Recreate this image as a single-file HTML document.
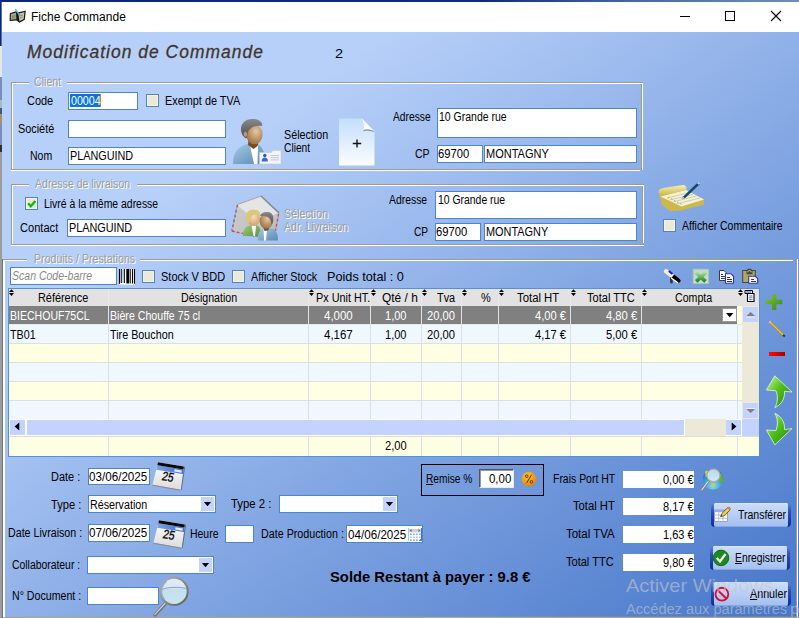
<!DOCTYPE html>
<html><head><meta charset="utf-8"><title>Fiche Commande</title>
<style>
*{box-sizing:border-box;margin:0;padding:0}
html,body{width:799px;height:618px;overflow:hidden;background:#fff}
body{font-family:"Liberation Sans",sans-serif;font-size:12.5px;color:#000;position:relative}
#win{position:absolute;left:0;top:0;width:799px;height:618px;overflow:hidden;background:#fff}
#client{position:absolute;left:2px;top:32px;width:797px;height:586px;background:linear-gradient(to bottom right,#b7d0f9 0%,#b7d0f9 24%,#4676c9 100%)}
.a{position:absolute}
.t{position:absolute;white-space:nowrap;height:16px;line-height:16px;transform-origin:0 50%;display:block}
.hd{font-style:italic;font-weight:normal;color:#42342a;height:24px;line-height:24px;-webkit-text-stroke:.3px #42342a}
.dis{color:#a29e96;text-shadow:1px 1px 0 #fff}
.wh{color:#fff}
.ph{font-style:italic;color:#8a8a8a}
.b{font-weight:bold}
.wm{color:rgba(196,198,204,.6);height:24px;line-height:24px}
.f{position:absolute;background:#fff;border:1px solid #4a86c8}
.fw{position:absolute;background:#fff}
.cb{position:absolute;width:13px;height:13px;background:#ece9d8;border:1px solid #4d84c4;box-shadow:inset 0 0 0 1px #fbf1e0}
.gl{position:absolute;background:#9c9a94}
.wl{position:absolute;background:#fff}
.btn{position:absolute;border-radius:4px;background:linear-gradient(#5a88e0,#2a52b8 35%,#0c2c96)}
.btn i{position:absolute;left:3px;right:3px;top:0;bottom:0;border-radius:2px;background:linear-gradient(#cddefa,#b9cff6 45%,#a3bfef);box-shadow:inset 0 -1px 0 #86a6e4,inset 0 1px 0 #d6e5fc}
.dd{position:absolute;width:13px;height:14px;background:#c3d3fd}
.dd:after{content:"";position:absolute;left:2.700px;top:4.700px;width:7.600px;height:4.600px;background:#000;clip-path:polygon(0 0,100% 0,50% 100%)}
</style></head><body><div id="win">
<!-- window frame -->
<div class="a" style="left:0;top:0;width:799px;height:2px;background:linear-gradient(to right,#0a2580 0%,#0c2a84 60%,#4a6aa0 80%,#6f8fb8 100%)"></div>
<div class="a" style="left:0;top:0;width:2px;height:618px;background:linear-gradient(#0a2580 0,#0a2580 46px,#e6e6e6 46px,#e6e6e6 77px,#7a8eb8 77px,#7a8eb8 100px,#a8b8c8 100px,#a8b8c8 108px,#405878 108px,#405878 114px,#a09070 114px,#a09070 125px,#7a8eb8 125px,#7a8eb8 145px,#303030 145px,#303030 152px,#9c9c9c 152px,#9c9c9c 100%)"></div>
<!-- title bar icons -->
<svg class="a" style="left:9px;top:8px" width="18" height="16" viewBox="0 0 18 16"><path d="M.8 5.200L7 3.300L9 4.600L16.800 2.600L15.800 11.800L10.600 14.800L7.400 12.600L.6 13Z" fill="#161616"/><path d="M1.900 6L7 4.600L7.400 11.200L1.700 11.700Z" fill="#a5a38a"/><path d="M9.400 5.800L15.400 4.100L14.700 10.900L10.500 13.200Z" fill="#c8c5a5"/><path d="M3 8.500L6.500 7.600M3 10L6.500 9.300M10.500 8L14 7M10.800 10L13.800 9" stroke="#77755f" stroke-width=".7"/><path d="M6.200 1.200L10.800 7.600" stroke="#5aa9cd" stroke-width="1.300"/></svg>
<svg class="a" style="left:679px;top:10px" width="12" height="12" viewBox="0 0 12 12"><path d="M1 6.5h10" stroke="#000" stroke-width="1"/></svg>
<svg class="a" style="left:724px;top:10px" width="12" height="12" viewBox="0 0 12 12"><rect x="1.5" y="1.5" width="9" height="9" fill="none" stroke="#000" stroke-width="1"/></svg>
<svg class="a" style="left:770px;top:10px" width="12" height="12" viewBox="0 0 12 12"><path d="M1 1l10 10M11 1L1 11" stroke="#000" stroke-width="1.1"/></svg>
<div class="a" style="left:1px;top:2px;width:1px;height:44px;background:#5a70b4"></div>
<div id="client"></div>
<!-- group box 1: Client -->
<div class="gl" style="left:11px;top:82px;width:18px;height:1px"></div><div class="wl" style="left:12px;top:83px;width:17px;height:1px"></div>
<div class="gl" style="left:67px;top:82px;width:576px;height:1px"></div><div class="wl" style="left:67px;top:83px;width:576px;height:1px"></div>
<div class="gl" style="left:11px;top:82px;width:1px;height:88px"></div><div class="wl" style="left:12px;top:83px;width:1px;height:86px"></div>
<div class="gl" style="left:641px;top:84px;width:1px;height:86px"></div><div class="wl" style="left:642px;top:83px;width:1px;height:87px"></div>
<div class="gl" style="left:12px;top:169px;width:628px;height:1px"></div><div class="wl" style="left:11px;top:170px;width:629px;height:1px"></div>
<!-- group box 2 -->
<div class="gl" style="left:11px;top:184px;width:18px;height:1px"></div><div class="wl" style="left:12px;top:185px;width:17px;height:1px"></div>
<div class="gl" style="left:137px;top:184px;width:507px;height:1px"></div><div class="wl" style="left:137px;top:185px;width:507px;height:1px"></div>
<div class="gl" style="left:11px;top:184px;width:1px;height:61px"></div><div class="wl" style="left:12px;top:185px;width:1px;height:59px"></div>
<div class="gl" style="left:642px;top:186px;width:1px;height:57px"></div><div class="wl" style="left:643px;top:185px;width:1px;height:58px"></div>
<div class="gl" style="left:12px;top:244px;width:632px;height:1px"></div><div class="wl" style="left:11px;top:245px;width:633px;height:1px"></div>
<!-- group box 3 -->
<div class="gl" style="left:3px;top:259px;width:24px;height:1px"></div><div class="wl" style="left:4px;top:260px;width:23px;height:1px"></div>
<div class="gl" style="left:140px;top:259px;width:654px;height:1px"></div><div class="wl" style="left:140px;top:260px;width:653px;height:1px"></div>
<div class="gl" style="left:2px;top:259px;width:1px;height:359px;background:#6b7488"></div><div class="wl" style="left:3px;top:260px;width:2px;height:357px"></div>
<div class="gl" style="left:796px;top:260px;width:1px;height:358px"></div><div class="wl" style="left:797px;top:259px;width:1px;height:359px"></div>
<div class="a" style="left:6px;top:617px;width:793px;height:1px;background:#a8a49c"></div><div class="a" style="left:6px;top:616px;width:793px;height:1px;background:rgba(168,164,156,.25)"></div>

<!-- client fields -->
<div class="f" style="left:68px;top:92px;width:70px;height:18px"></div>
<div class="a" style="left:70px;top:94px;width:30px;height:13px;background:#0a74da"></div><div class="a" style="left:100px;top:94px;width:1px;height:13px;background:#e27a22"></div>
<div class="cb" style="left:146px;top:94px"></div>
<div class="f" style="left:68px;top:120px;width:158px;height:18px"></div>
<div class="f" style="left:68px;top:147px;width:158px;height:18px"></div>
<div class="f" style="left:437px;top:108px;width:200px;height:30px"></div>
<div class="f" style="left:437px;top:145px;width:46px;height:18px"></div>
<div class="f" style="left:484px;top:145px;width:153px;height:18px"></div>
<!-- livraison fields -->
<div class="cb" style="left:25px;top:197px"><svg width="11" height="11" viewBox="0 0 11 11" style="position:absolute;left:0;top:0"><path d="M2.2 5.2L4.8 8.2L9.3 3" fill="none" stroke="#06be06" stroke-width="2.4"/></svg></div>
<div class="f" style="left:67px;top:219px;width:159px;height:18px"></div>
<div class="f" style="left:435px;top:191px;width:202px;height:28px"></div>
<div class="f" style="left:435px;top:223px;width:46px;height:18px"></div>
<div class="f" style="left:484px;top:223px;width:153px;height:18px"></div>
<div class="cb" style="left:663px;top:219px"></div>
<!-- produits toolbar -->
<div class="f" style="left:10px;top:267px;width:107px;height:18px"></div>
<div class="cb" style="left:142px;top:270px"></div>
<div class="cb" style="left:232px;top:270px"></div>

<!-- grid -->
<div class="a" id="grid" style="left:8px;top:288px;width:752px;height:169px;background:#5590d8"></div>
<div class="a" style="left:9px;top:289px;width:750px;height:17px;background:#e2e2e2"></div>
<div class="a" style="left:9px;top:306px;width:733px;height:18px;background:#808080"></div>
<div class="a" style="left:9px;top:324px;width:733px;height:19px;background:#f0f8ff"></div>
<div class="a" style="left:9px;top:343px;width:733px;height:19px;background:#ffffe4"></div>
<div class="a" style="left:9px;top:362px;width:733px;height:19px;background:#f0f8ff"></div>
<div class="a" style="left:9px;top:381px;width:733px;height:19px;background:#ffffe4"></div>
<div class="a" style="left:9px;top:400px;width:733px;height:19px;background:#f0f8ff"></div>
<div class="a" style="left:9px;top:436px;width:750px;height:20px;background:#ffffe4"></div>
<!-- row lines -->
<div class="a" style="left:9px;top:343px;width:733px;height:1px;background:#dcdfe4"></div>
<div class="a" style="left:9px;top:362px;width:733px;height:1px;background:#dcdfe4"></div>
<div class="a" style="left:9px;top:381px;width:733px;height:1px;background:#dcdfe4"></div>
<div class="a" style="left:9px;top:400px;width:733px;height:1px;background:#dcdfe4"></div>
<div class="a" style="left:9px;top:324px;width:733px;height:1px;background:#e6eaf2"></div>
<div class="a" style="left:108px;top:289px;width:1px;height:17px;background:#e9e9e9"></div><div class="a" style="left:108px;top:306px;width:1px;height:18px;background:#e2e2e2"></div><div class="a" style="left:108px;top:325px;width:1px;height:94px;background:#dcdfe6"></div><div class="a" style="left:108px;top:436px;width:1px;height:20px;background:#dcdfe6"></div><div class="a" style="left:308px;top:289px;width:1px;height:17px;background:#e9e9e9"></div><div class="a" style="left:308px;top:306px;width:1px;height:18px;background:#e2e2e2"></div><div class="a" style="left:308px;top:325px;width:1px;height:94px;background:#dcdfe6"></div><div class="a" style="left:308px;top:436px;width:1px;height:20px;background:#dcdfe6"></div><div class="a" style="left:370px;top:289px;width:1px;height:17px;background:#e9e9e9"></div><div class="a" style="left:370px;top:306px;width:1px;height:18px;background:#e2e2e2"></div><div class="a" style="left:370px;top:325px;width:1px;height:94px;background:#dcdfe6"></div><div class="a" style="left:370px;top:436px;width:1px;height:20px;background:#dcdfe6"></div><div class="a" style="left:421px;top:289px;width:1px;height:17px;background:#e9e9e9"></div><div class="a" style="left:421px;top:306px;width:1px;height:18px;background:#e2e2e2"></div><div class="a" style="left:421px;top:325px;width:1px;height:94px;background:#dcdfe6"></div><div class="a" style="left:421px;top:436px;width:1px;height:20px;background:#dcdfe6"></div><div class="a" style="left:461px;top:289px;width:1px;height:17px;background:#e9e9e9"></div><div class="a" style="left:461px;top:306px;width:1px;height:18px;background:#e2e2e2"></div><div class="a" style="left:461px;top:325px;width:1px;height:94px;background:#dcdfe6"></div><div class="a" style="left:461px;top:436px;width:1px;height:20px;background:#dcdfe6"></div><div class="a" style="left:498px;top:289px;width:1px;height:17px;background:#e9e9e9"></div><div class="a" style="left:498px;top:306px;width:1px;height:18px;background:#e2e2e2"></div><div class="a" style="left:498px;top:325px;width:1px;height:94px;background:#dcdfe6"></div><div class="a" style="left:498px;top:436px;width:1px;height:20px;background:#dcdfe6"></div><div class="a" style="left:570px;top:289px;width:1px;height:17px;background:#e9e9e9"></div><div class="a" style="left:570px;top:306px;width:1px;height:18px;background:#e2e2e2"></div><div class="a" style="left:570px;top:325px;width:1px;height:94px;background:#dcdfe6"></div><div class="a" style="left:570px;top:436px;width:1px;height:20px;background:#dcdfe6"></div><div class="a" style="left:641px;top:289px;width:1px;height:17px;background:#e9e9e9"></div><div class="a" style="left:641px;top:306px;width:1px;height:18px;background:#e2e2e2"></div><div class="a" style="left:641px;top:325px;width:1px;height:94px;background:#dcdfe6"></div><div class="a" style="left:641px;top:436px;width:1px;height:20px;background:#dcdfe6"></div><div class="a" style="left:737px;top:325px;width:1px;height:94px;background:#dcdfe6"></div><div class="a" style="left:737px;top:436px;width:1px;height:20px;background:#dcdfe6"></div><div class="a" style="left:737px;top:306px;width:5px;height:18px;background:#ffffe4"></div><svg class="a" style="left:9px;top:289px" width="6" height="8" viewBox="0 0 6 8"><path d="M0 3.1L2.5 0.3L5 3.1z M0 4.1h5L2.5 6.9z" fill="#000"/></svg><svg class="a" style="left:309px;top:289px" width="6" height="8" viewBox="0 0 6 8"><path d="M0 3.1L2.5 0.3L5 3.1z M0 4.1h5L2.5 6.9z" fill="#000"/></svg><svg class="a" style="left:371px;top:289px" width="6" height="8" viewBox="0 0 6 8"><path d="M0 3.1L2.5 0.3L5 3.1z M0 4.1h5L2.5 6.9z" fill="#000"/></svg><svg class="a" style="left:422px;top:289px" width="6" height="8" viewBox="0 0 6 8"><path d="M0 3.1L2.5 0.3L5 3.1z M0 4.1h5L2.5 6.9z" fill="#000"/></svg><svg class="a" style="left:462px;top:289px" width="6" height="8" viewBox="0 0 6 8"><path d="M0 3.1L2.5 0.3L5 3.1z M0 4.1h5L2.5 6.9z" fill="#000"/></svg><svg class="a" style="left:499px;top:289px" width="6" height="8" viewBox="0 0 6 8"><path d="M0 3.1L2.5 0.3L5 3.1z M0 4.1h5L2.5 6.9z" fill="#000"/></svg><svg class="a" style="left:571px;top:289px" width="6" height="8" viewBox="0 0 6 8"><path d="M0 3.1L2.5 0.3L5 3.1z M0 4.1h5L2.5 6.9z" fill="#000"/></svg><svg class="a" style="left:642px;top:289px" width="6" height="8" viewBox="0 0 6 8"><path d="M0 3.1L2.5 0.3L5 3.1z M0 4.1h5L2.5 6.9z" fill="#000"/></svg><svg class="a" style="left:738px;top:289px" width="6" height="8" viewBox="0 0 6 8"><path d="M0 3.1L2.5 0.3L5 3.1z M0 4.1h5L2.5 6.9z" fill="#000"/></svg>
<!-- scrollbars -->
<div class="a" style="left:742px;top:306px;width:17px;height:113px;background:#ece9d8"></div>
<div class="a" style="left:743px;top:307px;width:15px;height:15px;background:#c3d3fd"></div>
<svg class="a" style="left:746px;top:312px" width="10" height="6"><path d="M0 4.300L4.700 0L9.400 4.300z" fill="#808080"/><path d="M0 5h9.400" stroke="#fff" stroke-width=".8"/></svg>
<div class="a" style="left:743px;top:403px;width:15px;height:15px;background:#c3d3fd"></div>
<svg class="a" style="left:746px;top:408px" width="10" height="6"><path d="M0 .800L4.700 5.100L9.400 .800z" fill="#808080"/><path d="M0 .4h9.400" stroke="#fff" stroke-width=".8"/></svg>
<div class="a" style="left:9px;top:419px;width:733px;height:17px;background:#fff"></div>
<div class="a" style="left:742px;top:419px;width:17px;height:17px;background:#c3d3fd"></div>
<div class="a" style="left:10px;top:420px;width:15px;height:15px;background:#c3d3fd"></div>
<div class="a" style="left:27px;top:420px;width:657px;height:15px;background:#c3d3fd"></div>
<div class="a" style="left:685px;top:419px;width:41px;height:17px;background:#ece9d8"></div>
<div class="a" style="left:726px;top:420px;width:15px;height:15px;background:#c3d3fd"></div>
<svg class="a" style="left:14px;top:422px" width="6" height="9"><path d="M5.300 .6L.6 4.500L5.300 8.400z" fill="#000"/></svg>
<svg class="a" style="left:731px;top:422px" width="6" height="9"><path d="M.7 .6L5.400 4.500L.7 8.400z" fill="#000"/></svg>
<div class="a" style="left:9px;top:436px;width:750px;height:1px;background:#dcdcd8"></div>
<!-- combobox arrow in row 1 -->
<div class="a" style="left:722px;top:308px;width:15px;height:14px;background:#fff;border:1px solid #9a9a9a"></div>
<svg class="a" style="left:726px;top:313px" width="8" height="5"><path d="M0 0h7.400L3.700 4.200z" fill="#000"/></svg>

<!-- bottom fields -->
<div class="f" style="left:88px;top:468px;width:62px;height:17px"></div>
<div class="f" style="left:88px;top:495px;width:128px;height:18px"></div><div class="dd" style="left:201px;top:497px"></div>
<div class="f" style="left:279px;top:495px;width:119px;height:18px"></div><div class="dd" style="left:383px;top:497px"></div>
<div class="f" style="left:88px;top:524px;width:62px;height:18px"></div>
<div class="f" style="left:225px;top:525px;width:29px;height:18px"></div>
<div class="f" style="left:346px;top:525px;width:77px;height:18px"></div>
<div class="f" style="left:87px;top:556px;width:127px;height:18px"></div><div class="dd" style="left:199px;top:558px"></div>
<div class="f" style="left:87px;top:587px;width:72px;height:18px"></div>
<!-- remise -->
<div class="a" style="left:421px;top:464px;width:123px;height:32px;border:1px solid #000"></div>
<div class="a" style="left:479px;top:469px;width:35px;height:19px;background:#fff;border:1px solid #555;border-right-color:#e8e8e8;border-bottom-color:#e8e8e8;box-shadow:inset 1px 1px 0 #999"></div>
<!-- totals -->
<div class="fw" style="left:623px;top:471px;width:71px;height:17px"></div>
<div class="fw" style="left:623px;top:498px;width:71px;height:17px"></div>
<div class="fw" style="left:623px;top:526px;width:71px;height:17px"></div>
<div class="fw" style="left:623px;top:554px;width:71px;height:17px"></div>
<!-- buttons -->
<div class="btn" style="left:711px;top:503px;width:80px;height:24px"><i></i></div>
<div class="btn" style="left:710px;top:546px;width:80px;height:24px"><i></i></div>
<div class="btn" style="left:711px;top:582px;width:80px;height:24px"><i></i></div>
<svg class="a" style="left:0;top:0" width="799" height="618" viewBox="0 0 799 618">
<defs>
<linearGradient id="gBody" x1="0" y1="0" x2="1" y2="1"><stop offset="0" stop-color="#a6cae6"/><stop offset="1" stop-color="#5888b2"/></linearGradient>
<radialGradient id="gFace" cx=".6" cy=".35" r=".7"><stop offset="0" stop-color="#e8c8a0"/><stop offset="1" stop-color="#9a6c40"/></radialGradient>
<linearGradient id="gHair" x1="0" y1="0" x2="0" y2="1"><stop offset="0" stop-color="#8a8a8a"/><stop offset="1" stop-color="#4a4a4a"/></linearGradient>
<linearGradient id="gDoc" x1="0" y1="0" x2="0" y2="1"><stop offset="0" stop-color="#c4defc"/><stop offset="1" stop-color="#fbfdff"/></linearGradient>
<linearGradient id="gGreenA" x1="0" y1="0" x2="1" y2="1"><stop offset="0" stop-color="#d4f6b0"/><stop offset=".42" stop-color="#56c41c"/><stop offset="1" stop-color="#1a840a"/></linearGradient>
<linearGradient id="gPlus" x1="0" y1="0" x2="1" y2="1"><stop offset="0" stop-color="#8cc426"/><stop offset="1" stop-color="#2f8c1c"/></linearGradient>
<linearGradient id="gMinus" x1="0" y1="0" x2="1" y2="0"><stop offset="0" stop-color="#ff0808"/><stop offset="1" stop-color="#a80000"/></linearGradient>
<radialGradient id="gOr" cx=".4" cy=".3" r=".8"><stop offset="0" stop-color="#ffc23a"/><stop offset="1" stop-color="#e27c00"/></radialGradient>
<radialGradient id="gGlobe" cx=".5" cy=".8" r=".9"><stop offset="0" stop-color="#7ae0f8"/><stop offset=".6" stop-color="#2a90dc"/><stop offset="1" stop-color="#0c4aa8"/></radialGradient>
<linearGradient id="gGlass" x1="0" y1="0" x2="0" y2="1"><stop offset="0" stop-color="#e6ecf6"/><stop offset=".38" stop-color="#dae6f2"/><stop offset=".42" stop-color="#c4e0ec"/><stop offset="1" stop-color="#c8e4ee"/></linearGradient>
<linearGradient id="gRing" x1="0" y1="0" x2="1" y2="1"><stop offset="0" stop-color="#b4b4b4"/><stop offset="1" stop-color="#5e5e5e"/></linearGradient>
<linearGradient id="gCalB" x1="0" y1="0" x2="1" y2="0"><stop offset="0" stop-color="#7aa2e6"/><stop offset="1" stop-color="#3f6fd0"/></linearGradient>
<linearGradient id="gCalW" x1="0" y1="0" x2="0" y2="1"><stop offset="0" stop-color="#ffffff"/><stop offset="1" stop-color="#dcdcdc"/></linearGradient>
<linearGradient id="gEnv" x1="0" y1="0" x2="1" y2="1"><stop offset="0" stop-color="#ececec"/><stop offset="1" stop-color="#b4b4b4"/></linearGradient>
<radialGradient id="gFaceL" cx=".5" cy=".4" r=".7"><stop offset="0" stop-color="#f8dcb8"/><stop offset="1" stop-color="#c89868"/></radialGradient>
<linearGradient id="gGreenBody" x1="0" y1="0" x2="1" y2="1"><stop offset="0" stop-color="#9ccc78"/><stop offset="1" stop-color="#5a9440"/></linearGradient>
<linearGradient id="gRoll" x1="0" y1="0" x2="0" y2="1"><stop offset="0" stop-color="#f6eeb0"/><stop offset="1" stop-color="#cdb84e"/></linearGradient>
</defs>

<!-- user + card icon (client) -->
<g id="ic-user">
<path d="M233 164C233 152 238 146.500 247.500 144L258 144.500C263.500 147 265 155 265 164Z" fill="url(#gBody)"/>
<path d="M250 145.500L258 145.500L257.500 164L254 164Z" fill="#fff"/>
<path d="M248.500 139L259 140L257.500 146L253.500 149L248 145Z" fill="#7a4c24"/>
<ellipse cx="254.400" cy="134.400" rx="8.200" ry="9.900" fill="url(#gFace)"/>
<path d="M241.200 131.500C239.800 124.500 244.500 119.200 252 119C258.500 118.800 262.600 122 262.300 125.800C257 125.300 252 126 249.300 129.800C248 131.500 247.600 133 247.500 134.500L246.300 138.600C243.600 137.300 241.800 134.500 241.200 131.500Z" fill="url(#gHair)"/>
<ellipse cx="245.400" cy="134.300" rx="1.700" ry="2.700" fill="#c49468"/>
<path d="M259.500 152.500L271.500 152.500L272.500 150.500L281 150.500L281 164L259.500 164Z" fill="#f4f5fb" stroke="#c2c6d6" stroke-width=".6"/>
<circle cx="264.800" cy="155.500" r="1.700" fill="#2c55d8"/><path d="M261.700 161.500C261.700 158.500 263 157.500 264.800 157.500C266.600 157.500 267.900 158.500 267.900 161.500Z" fill="#3c66e4"/>
<path d="M270.500 155.500H279M270.500 157.700H279M270.500 159.900H279" stroke="#c4c4c8" stroke-width="1"/>
</g>

<!-- document plus icon -->
<g id="ic-doc">
<path d="M339 118.500L362 118.500L374.500 131.500L374.500 165.500L339 165.500Z" fill="url(#gDoc)"/>
<path d="M362 118.500C364 123 364.500 127 363.500 130C367 129 371 129.500 374.500 131.500Z" fill="#f6f8fb"/>
<path d="M363.500 130C367 129 371 129.500 374.500 131.500L373 131.800C370 130.800 367 130.600 363.500 131.200Z" fill="#8a8f98"/>
<path d="M352.800 143.500H361.200M357 139.500V147.500" stroke="#1a1208" stroke-width="1.400"/>
</g>

<!-- envelope with 2 users -->
<g id="ic-env">
<path d="M237.500 204.500L261 196L279 212.800L275.500 231L258 236.500L231.500 231Z" fill="url(#gEnv)" stroke="#9a9a9a" stroke-width=".8"/>
<path d="M238 205.500L261 197.200L278 213L258 221Z" fill="#e6e6e6" opacity=".95"/>
<path d="M237.600 205.500L254 220L245 234L232 230.800Z" fill="#c2c2c2" opacity=".75"/>
<path d="M261 196L279 212.800" stroke="#8c8c8c" stroke-width="1.600"/>
<path d="M237.500 205L232 230.500" stroke="#e04040" stroke-width="1.400" stroke-dasharray="2.500 2.500"/>
<path d="M237.200 207.500L232.500 228" stroke="#6a8ac8" stroke-width="1.400" stroke-dasharray="2.500 2.500" stroke-dashoffset="2.500"/>
<path d="M232 231L257.500 236.300" stroke="#e04040" stroke-width="1.300" stroke-dasharray="2.500 2.500"/>
<path d="M278.500 214L275.500 230.500" stroke="#e04040" stroke-width="1.300" stroke-dasharray="2.500 2.500"/>
<!-- left user -->
<path d="M242.800 236C243 229 246 226 251 225L256 225C260 226.500 261 230 261 236.500Z" fill="url(#gGreenBody)"/>
<path d="M251.500 225.500L256 225.500L255 236L253.500 236Z" fill="#fff"/>
<ellipse cx="253.500" cy="218.200" rx="6.700" ry="7.800" fill="url(#gFaceL)"/>
<path d="M246.500 221C244.500 213 248 209.800 253 209.800C258 209.800 260.500 212 260 214.500C255 213.500 250.500 215 249.500 220.500L248.800 223.500Z" fill="#d8c878"/>
<!-- right user -->
<path d="M257.800 240.500C257.500 233 260 229.500 264.500 228L272 228.500C276.500 230 278 234 277.800 240.500Z" fill="url(#gBody)"/>
<path d="M263.500 229L267 229L266 240.500L264 240.500Z" fill="#fff"/>
<path d="M262.500 225L270 226L268 230.500L264.500 231Z" fill="#7a4c24"/>
<ellipse cx="266.200" cy="220.800" rx="6.600" ry="7.900" fill="url(#gFace)"/>
<path d="M259.800 216C261 212.500 264.500 211.500 268 212C272.500 212.500 274 216 273 222L271.500 225.500C271.800 221 270 217.500 266.500 216.500C264 216 261.500 216.300 259.800 216Z" fill="url(#gHair)"/>
</g>

<!-- notepad -->
<g id="ic-note">
<path d="M659 194L662 205L670 211L681 210.500L704 204.500L704 199.500L686 190Z" fill="#cdb84e"/>
<path d="M660.500 196.500L686 190L704 199.500L681.500 206.500Z" fill="#f6f2cc"/>
<path d="M667 198L690 192.500M669.500 200L693 194.500M672.500 202L696.500 196M676 204L700 198" stroke="#b8c4c8" stroke-width=".8"/>
<path d="M668 197L682 204.500" stroke="#d89a40" stroke-width="1" stroke-dasharray="1.500 2"/>
<path d="M658.500 192C658.500 189.500 660.500 188.500 663 188L683 185C686 185 687 187.500 686.500 189.500L665 195C661.500 196 658.500 195 658.500 192Z" fill="url(#gRoll)"/>
<path d="M681.500 199L683.200 196.500L698 182.300L699.800 184.200L685 198.200Z" fill="#18466e"/>
<path d="M697 183.300L698.500 181.900L700 183.400L698.600 184.800Z" fill="#c4ccd4"/>
<path d="M681.500 199L683.200 196.800L684.600 198.200Z" fill="#d8dce0"/>
</g>

<!-- barcode -->
<g id="ic-bar">
<rect x="119" y="269" width="16" height="15.500" fill="#fff"/>
<path d="M119.500 269V284.500M121.300 269V283M124.300 269V283M130.200 269V283.500M132.500 269V283.500M134.500 269V284.500" stroke="#000" stroke-width="1.100"/>
<rect x="126.300" y="269" width="2.700" height="14.500" fill="#000"/>
<path d="M122.300 270V283M123 270V276" stroke="#9bbcf0" stroke-width=".8"/>
<path d="M119 284.300H135" stroke="#fff" stroke-width="1" stroke-dasharray="1 1.500"/>
</g>

<!-- toolbar: scanner/pen -->
<g id="ic-scan">
<path d="M671.300 277L671.500 282.300" stroke="#333" stroke-width="2.600" stroke-linecap="round"/>
<path d="M666 271.300L672 275.800" stroke="#f2eedc" stroke-width="4.400" stroke-linecap="round"/>
<path d="M668.800 271L672.500 274" stroke="#1220d6" stroke-width="2.200"/>
<path d="M672.800 276.300L677.800 280.200" stroke="#000" stroke-width="4.400" stroke-linecap="butt"/>
<path d="M677.500 279.800L678.600 280.700" stroke="#000" stroke-width="4" stroke-linecap="round"/>
<path d="M671.600 278.300L677.600 282.600" stroke="#fff" stroke-width="1.300" stroke-linecap="round"/>
</g>
<!-- excel -->
<g id="ic-xl">
<linearGradient id="gXl" gradientUnits="userSpaceOnUse" x1="0" y1="271" x2="0" y2="282"><stop offset="0" stop-color="#c0ecb8"/><stop offset=".45" stop-color="#6cc468"/><stop offset="1" stop-color="#12841a"/></linearGradient>
<linearGradient id="gXlb" x1="0" y1="0" x2="0" y2="1"><stop offset="0" stop-color="#c6d6c6"/><stop offset="1" stop-color="#dccfe0"/></linearGradient>
<rect x="693.200" y="269.200" width="15.200" height="14.300" fill="url(#gXlb)" stroke="#9cd69c" stroke-width=".8"/>
<path d="M696 272.500L705.500 281.300M705.800 272.500L696.200 281.300" stroke="url(#gXl)" stroke-width="3.700"/>
</g>
<!-- copy -->
<g id="ic-copy">
<path d="M719.500 270.500H724L726 272.500V280.500H719.500Z" fill="#fff" stroke="#3c3c3c" stroke-width="1"/>
<path d="M721 274.500H723M721 276.500H725M721 278.500H725" stroke="#3c3c3c" stroke-width="1" shape-rendering="crispEdges"/>
<path d="M725.500 273.800H731L733.500 276.300V283.300H725.500Z" fill="#fff" stroke="#3636a2" stroke-width="1.100"/>
<path d="M727 277.500H730M727 279.500H732M727 281.500H732" stroke="#333" stroke-width="1" shape-rendering="crispEdges"/>
</g>
<!-- paste -->
<g id="ic-paste">
<rect x="742.700" y="270.500" width="12.600" height="12" fill="#aea766" stroke="#464640" stroke-width="1"/>
<path d="M746.500 274.300V270.300L748.300 268.800H750.700L752.500 270.300V274.300Z" fill="#444440"/>
<path d="M747.800 272.300C747.800 270 751.200 270 751.200 272.300" stroke="#f4ec30" stroke-width="1" fill="none"/>
<path d="M748.700 276.300H755.300L757.700 278.500V283.300H748.700Z" fill="#fff" stroke="#3636a2" stroke-width="1.100"/>
<path d="M750.500 279.500H753.500M750.500 281.500H755.500" stroke="#3636a2" stroke-width="1" shape-rendering="crispEdges"/>
</g>
<!-- header icon -->
<g id="ic-hdr">
<path d="M745 290.500H752.500V293.500H745Z" fill="#dfe6ff" stroke="#000" stroke-width="1"/>
<path d="M746 292H751" stroke="#4a5ae0" stroke-width="1"/>
<path d="M747.500 293.500H754V301.500H747.500Z" fill="#fff" stroke="#000" stroke-width="1.100"/>
<path d="M749 296H752.500M749 297.800H752.500M749 299.600H752.500" stroke="#5a68e0" stroke-width=".9"/>
</g>

<!-- side icons -->
<path d="M772 294H776.300V299.800H782.300V304.200H776.300V310H772V304.200H765.800V299.800H772Z" fill="url(#gPlus)"/>
<g id="ic-pencil">
<path d="M770 322L783.800 335.500" stroke="#9a7a20" stroke-width="2.200"/>
<path d="M770 322L783.500 335.200" stroke="#f4c81c" stroke-width="1.500"/>
<path d="M783 334.800L784.800 336.500" stroke="#3a3020" stroke-width="1.800"/>
<path d="M769.300 321.300L770.800 322.800" stroke="#e8b0a0" stroke-width="2.400"/>
</g>
<rect x="769" y="352" width="16" height="4" fill="url(#gMinus)"/>
<path d="M774.800 375.800L792 392L784.500 391.300C785 399 781 405 774.800 407.600C778 402 778 396 776 390.800L766.400 390Z" fill="url(#gGreenA)" stroke="#e4f6d8" stroke-width=".8"/>
<path d="M774.800 413.300C781 416 785 422 784.500 429.600L792 428.600L774.800 444.800L766.400 430L776 430.600C778 424 778 419 774.800 413.300Z" fill="url(#gGreenA)" stroke="#e4f6d8" stroke-width=".8"/>

<!-- calendar icons -->
<g id="cal1">
<path d="M158 462.200L183.900 466.400L180.700 489.700L152.500 484.800Z" fill="url(#gCalW)"/>
<path d="M152.500 484.800L180.700 489.700L180.500 490.700L152.300 485.700Z" fill="#8a8a8a"/>
<path d="M181 489.700L184.200 466.600L185 467L181.700 490.100Z" fill="#606060"/>
<path d="M157.300 465.200L183.500 469.400L182.900 473.900L156.200 469.700Z" fill="url(#gCalB)"/>
<path d="M158 462.200L183.900 466.400L183.500 469.400L157.300 465.200Z" fill="#0a0a0a"/>
<path d="M174.500 469.300L181.800 470.500L181.500 472.700L174.200 471.500Z" fill="#e4ecfc"/>
<text x="-5.700" y="5.300" font-family="Liberation Sans" font-size="12.500" fill="#0a0a0a" stroke="#0a0a0a" stroke-width=".4" transform="translate(168.300 475.700) rotate(8) skewX(-6)" textLength="11.500" lengthAdjust="spacingAndGlyphs">25</text>
</g>
<g transform="translate(1 58)">
<path d="M158 462.200L183.900 466.400L180.700 489.700L152.500 484.800Z" fill="url(#gCalW)"/>
<path d="M152.500 484.800L180.700 489.700L180.500 490.700L152.300 485.700Z" fill="#8a8a8a"/>
<path d="M181 489.700L184.200 466.600L185 467L181.700 490.100Z" fill="#606060"/>
<path d="M157.300 465.200L183.500 469.400L182.900 473.900L156.200 469.700Z" fill="url(#gCalB)"/>
<path d="M158 462.200L183.900 466.400L183.500 469.400L157.300 465.200Z" fill="#0a0a0a"/>
<path d="M174.500 469.300L181.800 470.500L181.500 472.700L174.200 471.500Z" fill="#e4ecfc"/>
<text x="-5.700" y="5.300" font-family="Liberation Sans" font-size="12.500" fill="#0a0a0a" stroke="#0a0a0a" stroke-width=".4" transform="translate(168.300 475.700) rotate(8) skewX(-6)" textLength="11.500" lengthAdjust="spacingAndGlyphs">25</text>
</g>

<!-- mini calendar in Date Production -->
<g id="ic-mcal">
<path d="M408.500 528V541" stroke="#9fd0f0" stroke-width="1"/>
<path d="M421.500 528V541" stroke="#3f78c8" stroke-width="1"/>
<rect x="409" y="529" width="12" height="3.300" fill="#d0d0d0"/>
<path d="M411.500 529.300L409.800 530.600L411.500 531.900ZM418.500 529.300L420.200 530.600L418.500 531.900Z" fill="#555"/>
<g fill="#86b4ff"><rect x="410" y="533.500" width="1.800" height="1.700"/><rect x="413" y="533.500" width="1.800" height="1.700"/><rect x="416" y="533.500" width="1.800" height="1.700"/><rect x="419" y="533.500" width="1.800" height="1.700"/>
<rect x="410" y="539.300" width="1.800" height="1.700"/><rect x="413" y="539.300" width="1.800" height="1.700"/><rect x="416" y="539.300" width="1.800" height="1.700"/></g>
<g fill="#c8c8c8"><rect x="410" y="536.400" width="1.800" height="1.700"/><rect x="413" y="536.400" width="1.800" height="1.700"/><rect x="416" y="536.400" width="1.800" height="1.700"/><rect x="419" y="536.400" width="1.800" height="1.700"/></g>
<path d="M418.500 541L421 541L421 538.500Z" fill="#3f78c8"/>
</g>

<!-- magnifier (N° document) -->
<g id="ic-mag">
<path d="M165.500 603.500L155 615" stroke="#787878" stroke-width="3.400" stroke-linecap="round"/>
<path d="M165 603.300L154.800 614.500" stroke="#dcdcdc" stroke-width="1.100" stroke-linecap="round"/>
<circle cx="174.100" cy="591.400" r="13.600" fill="url(#gGlass)" stroke="url(#gRing)" stroke-width="2"/>
<path d="M161.500 589.500C168 586.800 180 586.800 186.500 588.500" stroke="#7a9cc4" stroke-width=".9" fill="none"/>
<path d="M164.500 599.500A12.300 12.300 0 0 1 166.500 581.500" stroke="#8facc8" stroke-width="1.700" fill="none" opacity=".8"/>
</g>

<!-- globe search -->
<g id="ic-globe">
<circle cx="713" cy="479.500" r="10.200" fill="url(#gGlobe)"/>
<path d="M705 472C706.500 470 708 470 709 473L707.500 477.500L705.500 476.500Z" fill="#c8d040"/>
<path d="M720 473C722.500 474.500 723.500 478 722.500 482L720.500 485L719.500 480Z" fill="#58b828"/>
<path d="M711.500 483L716.500 483.500L714 487.500L712.500 489Z" fill="#d8c848"/>
<path d="M708.300 481.800L702 490.200" stroke="#8a8a8a" stroke-width="2.400" stroke-linecap="round"/>
<path d="M708 481.600L701.900 489.800" stroke="#f0f0f0" stroke-width="1" stroke-linecap="round"/>
<circle cx="713.500" cy="475.400" r="6.500" fill="#eef4f8" fill-opacity=".8" stroke="#a8a8a0" stroke-width="1.100"/>
</g>

<!-- remise % -->
<circle cx="529" cy="479" r="7.300" fill="url(#gOr)"/>
<g stroke="#5a3c00" stroke-width="1" fill="none"><circle cx="526.800" cy="476.200" r="1.300"/><circle cx="531.400" cy="481.800" r="1.300"/><path d="M531.500 474.800L526.500 483.200"/></g>

<!-- button icons -->
<g id="ic-transf">
<rect x="714.500" y="510" width="13" height="11.500" fill="#fff" stroke="#8a96b8" stroke-width=".8"/>
<rect x="714.500" y="510" width="13" height="2.200" fill="#9aa8f0"/>
<path d="M714.500 515H727.500M714.500 518.300H727.500M718.800 512V521.500M723 512V521.500" stroke="#a8b4d0" stroke-width=".8"/>
<path d="M720.600 516.600L721.800 513.400L727.800 507.600L730.200 510L724 515.800Z" fill="#f0d040" stroke="#3a3424" stroke-width=".7"/>
<path d="M727.200 508.200L728.400 507C729.500 506.400 731.200 508 730.600 509.200L729.500 510.400Z" fill="#e07858"/>
<path d="M720.800 516.500L721.400 515L722.400 516Z" fill="#222"/>
</g>
<g id="ic-ok">
<circle cx="721" cy="557.900" r="7.800" fill="#1c8a1c"/>
<circle cx="721" cy="557.900" r="7.800" fill="none" stroke="#0c5c0c" stroke-width=".8"/>
<path d="M716.800 558L720 561.500L725.500 554" stroke="#fff" stroke-width="2.200" fill="none"/>
</g>
<g id="ic-no">
<circle cx="721.900" cy="594.200" r="6.400" fill="none" stroke="#e00c30" stroke-width="1.900"/>
<path d="M717.300 589.700L726.500 598.700" stroke="#e00c30" stroke-width="1.900"/>
</g>
</svg>

<span class="t " style="left:31.46px;top:8.5px;font-size:12.5px;transform:scaleX(0.9611);">Fiche Commande</span>
<span class="t hd" style="left:27.22px;top:40.0px;font-size:18.5px;transform:scaleX(0.9416);letter-spacing:1.1px;">Modification de Commande</span>
<span class="t " style="left:335.34px;top:45.5px;font-size:13px;transform:scaleX(1.1198);">2</span>
<span class="t dis" style="left:33.52px;top:74.0px;font-size:12.5px;transform:scaleX(0.8498);">Client</span>
<span class="t dis" style="left:34.52px;top:176.0px;font-size:12.5px;transform:scaleX(0.8454);">Adresse de livraison</span>
<span class="t dis" style="left:33.52px;top:251.0px;font-size:12.5px;transform:scaleX(0.8515);">Produits / Prestations</span>
<span class="t " style="left:26.51px;top:93.0px;font-size:12.5px;transform:scaleX(0.8767);">Code</span>
<span class="t " style="left:17.51px;top:121.0px;font-size:12.5px;transform:scaleX(0.8679);">Société</span>
<span class="t " style="left:29.53px;top:148.0px;font-size:12.5px;transform:scaleX(0.8390);">Nom</span>
<span class="t wh" style="left:70.52px;top:92.7px;font-size:12.5px;transform:scaleX(0.8535);">00004</span>
<span class="t " style="left:164.51px;top:93.0px;font-size:12.5px;transform:scaleX(0.8704);">Exempt de TVA</span>
<span class="t " style="left:69.51px;top:148.0px;font-size:12.5px;transform:scaleX(0.8664);">PLANGUIND</span>
<span class="t " style="left:283.52px;top:127.0px;font-size:12.5px;transform:scaleX(0.8589);">Sélection</span>
<span class="t " style="left:283.54px;top:140.0px;font-size:12.5px;transform:scaleX(0.8172);">Client</span>
<span class="t " style="left:392.54px;top:109.0px;font-size:12.5px;transform:scaleX(0.8205);">Adresse</span>
<span class="t " style="left:439.03px;top:109.0px;font-size:12.5px;transform:scaleX(0.8393);">10 Grande rue</span>
<span class="t " style="left:415.03px;top:146.0px;font-size:12.5px;transform:scaleX(0.8438);">CP</span>
<span class="t " style="left:438.49px;top:146.0px;font-size:12.5px;transform:scaleX(0.8985);">69700</span>
<span class="t " style="left:485.51px;top:146.0px;font-size:12.5px;transform:scaleX(0.8796);">MONTAGNY</span>
<span class="t " style="left:43.53px;top:196.0px;font-size:12.5px;transform:scaleX(0.8339);">Livré à la même adresse</span>
<span class="t " style="left:19.5px;top:220.0px;font-size:12.5px;transform:scaleX(0.8869);">Contact</span>
<span class="t " style="left:68.51px;top:220.0px;font-size:12.5px;transform:scaleX(0.8664);">PLANGUIND</span>
<span class="t dis" style="left:284.02px;top:205.9px;font-size:12.5px;transform:scaleX(0.8589);">Sélection</span>
<span class="t dis" style="left:284.02px;top:218.9px;font-size:12.5px;transform:scaleX(0.8472);">Adr. Livraison</span>
<span class="t " style="left:388.53px;top:192.0px;font-size:12.5px;transform:scaleX(0.8318);">Adresse</span>
<span class="t " style="left:437.53px;top:192.0px;font-size:12.5px;transform:scaleX(0.8330);">10 Grande rue</span>
<span class="t " style="left:413.54px;top:224.0px;font-size:12.5px;transform:scaleX(0.8125);">CP</span>
<span class="t " style="left:436.49px;top:224.0px;font-size:12.5px;transform:scaleX(0.8985);">69700</span>
<span class="t " style="left:485.51px;top:224.0px;font-size:12.5px;transform:scaleX(0.8724);">MONTAGNY</span>
<span class="t " style="left:682.03px;top:218.0px;font-size:12.5px;transform:scaleX(0.8342);">Afficher Commentaire</span>
<span class="t ph" style="left:11.53px;top:268.0px;font-size:12.5px;transform:scaleX(0.8420);">Scan Code-barre</span>
<span class="t " style="left:160.5px;top:269.0px;font-size:12.5px;transform:scaleX(0.8803);">Stock V BDD</span>
<span class="t " style="left:250.52px;top:269.0px;font-size:12.5px;transform:scaleX(0.8607);">Afficher Stock</span>
<span class="t " style="left:326.93px;top:269.0px;font-size:13px;transform:scaleX(0.9761);">Poids total : 0</span>
<span class="t " style="left:37.51px;top:290.0px;font-size:12.5px;transform:scaleX(0.8701);">Référence</span>
<span class="t " style="left:180.52px;top:290.0px;font-size:12.5px;transform:scaleX(0.8509);">Désignation</span>
<span class="t " style="left:315.51px;top:290.0px;font-size:12.5px;transform:scaleX(0.8669);">Px Unit HT.</span>
<span class="t " style="left:382.46px;top:290.0px;font-size:12.5px;transform:scaleX(0.9542);">Qté / h</span>
<span class="t " style="left:437.01px;top:290.0px;font-size:12.5px;transform:scaleX(0.8732);">Tva</span>
<span class="t " style="left:480.51px;top:290.0px;font-size:12.5px;transform:scaleX(0.8718);">%</span>
<span class="t " style="left:517.49px;top:290.0px;font-size:12.5px;transform:scaleX(0.9076);">Total HT</span>
<span class="t " style="left:587.0px;top:290.0px;font-size:12.5px;transform:scaleX(0.8844);">Total TTC</span>
<span class="t " style="left:675.02px;top:290.0px;font-size:12.5px;transform:scaleX(0.8489);">Compta</span>
<span class="t wh" style="left:10.03px;top:307.5px;font-size:12.5px;transform:scaleX(0.8431);">BIECHOUF75CL</span>
<span class="t wh" style="left:110.02px;top:307.5px;font-size:12.5px;transform:scaleX(0.8499);">Bière Chouffe 75 cl</span>
<span class="t wh" style="left:324.48px;top:307.5px;font-size:12.5px;transform:scaleX(0.9195);">4,000</span>
<span class="t wh" style="left:385.0px;top:307.5px;font-size:12.5px;transform:scaleX(0.8816);">1,00</span>
<span class="t wh" style="left:426.5px;top:307.5px;font-size:12.5px;transform:scaleX(0.8945);">20,00</span>
<span class="t wh" style="left:535.25px;top:307.5px;font-size:12.5px;transform:scaleX(0.8910);">4,00 €</span>
<span class="t wh" style="left:606.49px;top:307.5px;font-size:12.5px;transform:scaleX(0.8985);">4,80 €</span>
<span class="t " style="left:10.02px;top:326.5px;font-size:12.5px;transform:scaleX(0.8592);">TB01</span>
<span class="t " style="left:110.02px;top:326.5px;font-size:12.5px;transform:scaleX(0.8619);">Tire Bouchon</span>
<span class="t " style="left:324.48px;top:326.5px;font-size:12.5px;transform:scaleX(0.9195);">4,167</span>
<span class="t " style="left:385.0px;top:326.5px;font-size:12.5px;transform:scaleX(0.8816);">1,00</span>
<span class="t " style="left:426.5px;top:326.5px;font-size:12.5px;transform:scaleX(0.8945);">20,00</span>
<span class="t " style="left:535.25px;top:326.5px;font-size:12.5px;transform:scaleX(0.8910);">4,17 €</span>
<span class="t " style="left:606.49px;top:326.5px;font-size:12.5px;transform:scaleX(0.8985);">5,00 €</span>
<span class="t " style="left:384.5px;top:438.0px;font-size:12.5px;transform:scaleX(0.8925);">2,00</span>
<span class="t " style="left:50.51px;top:469.0px;font-size:12.5px;transform:scaleX(0.8754);">Date :</span>
<span class="t " style="left:89.48px;top:469.0px;font-size:12.5px;transform:scaleX(0.9316);">03/06/2025</span>
<span class="t " style="left:50.5px;top:496.7px;font-size:12.5px;transform:scaleX(0.8876);">Type :</span>
<span class="t " style="left:89.52px;top:496.5px;font-size:12.5px;transform:scaleX(0.8572);">Réservation</span>
<span class="t " style="left:230.89px;top:496.0px;font-size:12.5px;transform:scaleX(0.9070);">Type 2 :</span>
<span class="t " style="left:7.52px;top:525.3px;font-size:12.5px;transform:scaleX(0.8540);">Date Livraison :</span>
<span class="t " style="left:89.48px;top:525.3px;font-size:12.5px;transform:scaleX(0.9316);">07/06/2025</span>
<span class="t " style="left:190.23px;top:526.0px;font-size:12.5px;transform:scaleX(0.8356);">Heure</span>
<span class="t " style="left:260.52px;top:526.0px;font-size:12.5px;transform:scaleX(0.8580);">Date Production :</span>
<span class="t " style="left:347.98px;top:526.5px;font-size:12.5px;transform:scaleX(0.9316);">04/06/2025</span>
<span class="t " style="left:11.53px;top:557.0px;font-size:12.5px;transform:scaleX(0.8310);">Collaborateur :</span>
<span class="t " style="left:11.52px;top:588.0px;font-size:12.5px;transform:scaleX(0.8495);">N° Document :</span>
<span class="t b" style="left:330.03px;top:568.7px;font-size:14px;transform:scaleX(1.0557);">Solde Restant à payer : 9.8 €</span>
<span class="t " style="left:426.24px;top:471.3px;font-size:12.5px;transform:scaleX(0.8148);"><u>R</u>emise %</span>
<span class="t " style="left:489.49px;top:470.5px;font-size:12.5px;transform:scaleX(0.9143);">0,00</span>
<span class="t " style="left:552.53px;top:471.0px;font-size:12.5px;transform:scaleX(0.8363);">Frais Port HT</span>
<span class="t " style="left:572.89px;top:498.0px;font-size:12.5px;transform:scaleX(0.8988);">Total HT</span>
<span class="t " style="left:566.08px;top:526.3px;font-size:12.5px;transform:scaleX(0.9173);">Total TVA</span>
<span class="t " style="left:566.1px;top:554.0px;font-size:12.5px;transform:scaleX(0.8825);">Total TTC</span>
<span class="t " style="left:662.5px;top:471.5px;font-size:12.5px;transform:scaleX(0.8805);">0,00 €</span>
<span class="t " style="left:662.5px;top:498.5px;font-size:12.5px;transform:scaleX(0.8805);">8,17 €</span>
<span class="t " style="left:662.5px;top:526.5px;font-size:12.5px;transform:scaleX(0.8805);">1,63 €</span>
<span class="t " style="left:662.5px;top:555.0px;font-size:12.5px;transform:scaleX(0.8805);">9,80 €</span>
<span class="t " style="left:738.33px;top:507.0px;font-size:12.5px;transform:scaleX(0.8401);">Transférer</span>
<span class="t " style="left:734.84px;top:550.3px;font-size:12.5px;transform:scaleX(0.8266);"><u>E</u>nregistrer</span>
<span class="t " style="left:749.72px;top:586.0px;font-size:12.5px;transform:scaleX(0.8581);"><u>A</u>nnuler</span>
<span class="t wm" style="left:625.6px;top:574.3px;font-size:19px;transform:scaleX(1.0518);">Activer Windows</span>
<span class="t wm" style="left:625.84px;top:597.3px;font-size:14px;transform:scaleX(1.0403);">Accédez aux paramètres</span>
<span class="t wm" style="left:790.24px;top:597.0px;font-size:14px;transform:scaleX(1.1987);">p</span>

</div></body></html>
